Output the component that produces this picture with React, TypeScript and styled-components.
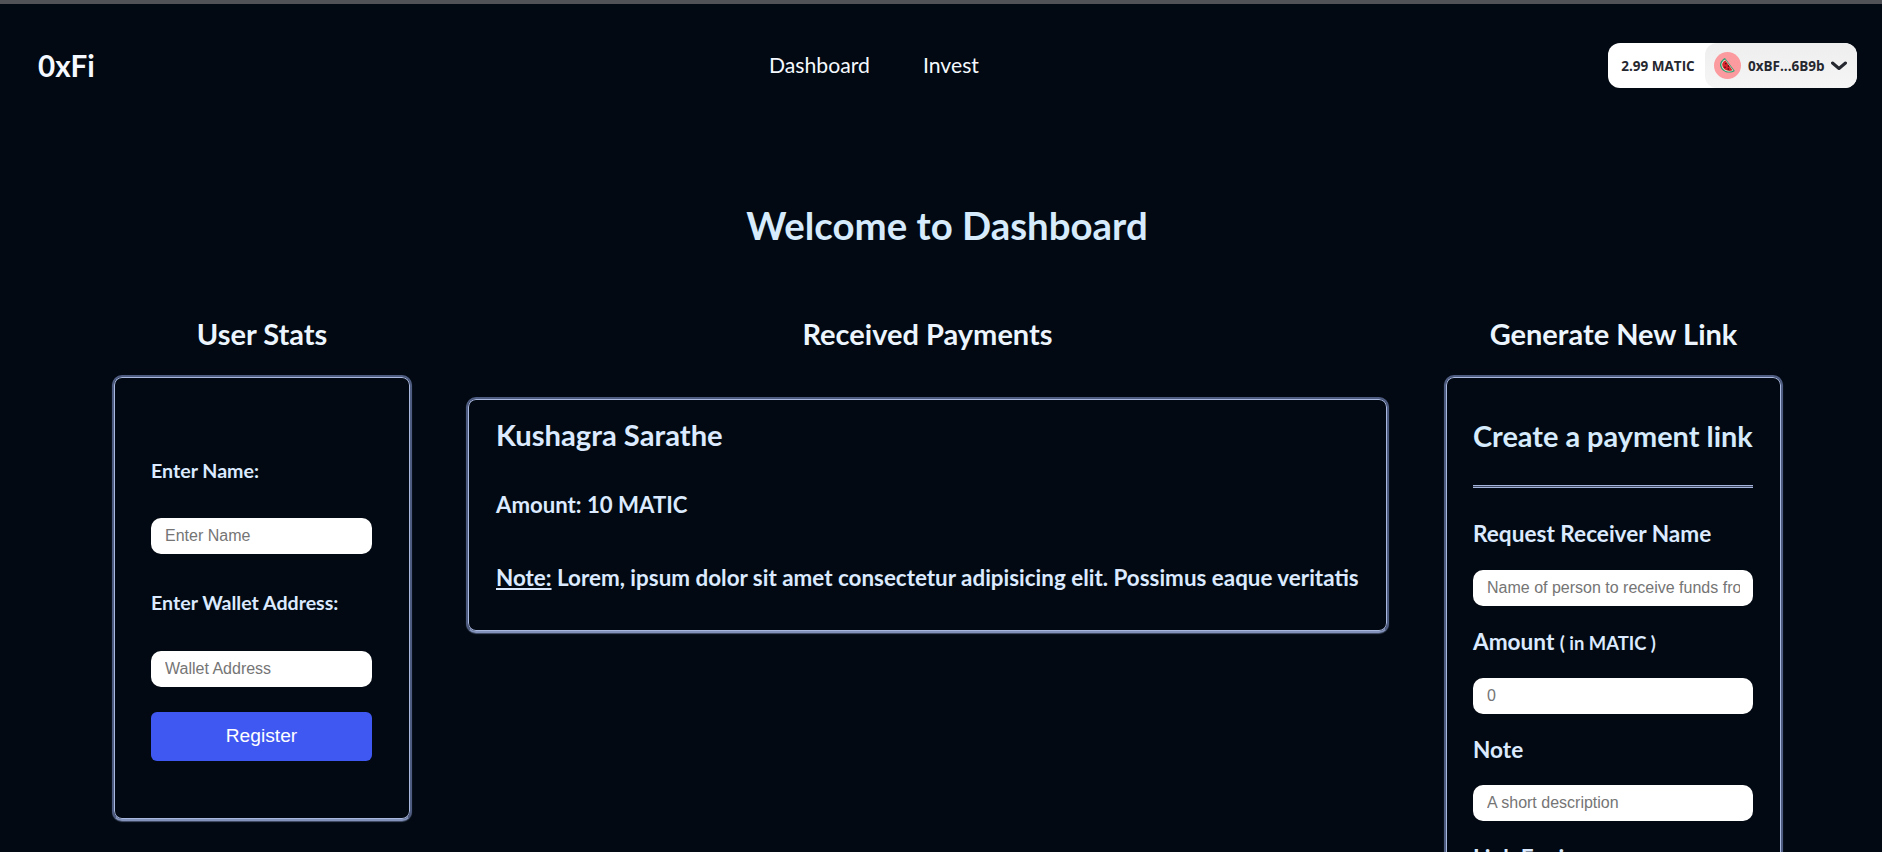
import React from "react";
import styled, { createGlobalStyle } from "styled-components";

const Global = createGlobalStyle`
  html, body { margin: 0; padding: 0; background: #020912; overflow: hidden; }
  body { font-family: Lato, "Liberation Sans", sans-serif; }
  * { box-sizing: border-box; }
`;
const Page = styled.div`
  width: 1882px; height: 852px; overflow: hidden; background: #020912; color: #dbeafe;
  border-top: 4px solid #505257;
`;
const Nav = styled.nav`
  display: flex; align-items: center; height: 123px; padding: 0 25px 0 38px; justify-content: space-between;
`;
const Logo = styled.div`
  font-size: 29.6px; font-weight: 700; color: #f5f9ff; width: 731px;
`;
const NavLinks = styled.div`
  display: flex; gap: 53px; flex: 1; padding-bottom: 1px;
`;
const NavLink = styled.a`
  font-size: 21.2px; color: #f5f9ff;
`;
const Wallet = styled.div`
  display: flex; width: 249px; height: 45px; border-radius: 12px; background: #fff; overflow: hidden;
  font-family: "Open Sans", sans-serif; font-weight: 700; font-size: 13.5px; color: #262830; align-items: stretch;
`;
const Balance = styled.div`
  width: 97px; display: flex; align-items: center; justify-content: center; padding-left: 3px;
`;
const Account = styled.div`
  flex: 1; display: flex; align-items: center; padding-left: 9px; gap: 7px;
  background: linear-gradient(180deg, #eeeeee, #f5f5f5); border-radius: 12px;
`;
const Avatar = styled.span`
  width: 27px; height: 27px; border-radius: 50%; background: #fb9a9f; display: flex; align-items: center; justify-content: center;
`;
const Address = styled.span`
  margin-right: -1px;
`;
const Title = styled.h1`
  margin: 75px 0 0; padding-left: 12px; text-align: center; font-size: 38.4px; font-weight: 700; line-height: 46px; height: 46px; color: #d6ebfb;
`;
const Columns = styled.div`
  display: flex; align-items: flex-start; padding-left: 112px; margin-top: 69px; gap: 54px;
`;
const Column = styled.section<{ $w: number }>`
  width: ${(p) => p.$w}px; flex: none; display: flex; flex-direction: column;
`;
const LinkColumn = styled(Column)`
  margin-left: 1px;
`;
const ColumnTitle = styled.h2`
  margin: 0; text-align: center; font-size: 29px; line-height: 34px; font-weight: 700; color: #ecf5fd; height: 58px;
`;
const Card = styled.div`
  border: 2px solid #4f5c82; border-bottom-color: #8292ba; border-radius: 10px; background: #020912;
  box-shadow: inset 0 0 0 1px #a9b8de, 0 1px 1px rgba(139, 157, 199, 0.5);
`;
const StatsCard = styled(Card)`
  height: 446px; padding: 82px 38px 0 37px; display: flex; flex-direction: column;
`;
const StatLabel = styled.label`
  font-size: 19.6px; font-weight: 700; line-height: 23px; display: block; color: #dbeafe;
`;
const Field = styled.input`
  display: block; width: 100%; height: 36px; border: none; border-radius: 10px; background: #fff; padding: 0 13px 0 14px;
  font-family: "Liberation Sans", Arial, sans-serif; font-size: 16px; outline: none;
  &::placeholder { color: #757575; opacity: 1; }
`;
const NameField = styled(Field)` margin-top: 36px; `;
const WalletLabel = styled(StatLabel)` margin-top: 37px; `;
const AddressField = styled(Field)` margin-top: 37px; `;
const RegisterButton = styled.button`
  margin-top: 25px; height: 49px; width: 100%; border: none; border-radius: 6px; background: #4058f2; color: #fff; padding: 0 0 2px;
  font-family: "Liberation Sans", Arial, sans-serif; font-size: 19.2px;
`;
const PaymentCard = styled(Card)`
  margin-top: 22px; height: 236px; padding: 19px 28px 0 28px;
`;
const Payer = styled.h3`
  margin: 0; font-size: 29.2px; line-height: 34px; font-weight: 700; color: #dbeafe;
`;
const Amount = styled.p`
  margin: 39px 0 0; font-size: 22.2px; line-height: 28px; font-weight: 700; white-space: nowrap;
`;
const Note = styled(Amount)`
  margin-top: 45px; font-size: 22.42px;
`;
const NoteKey = styled.span`
  text-decoration: underline;
`;
const LinkCard = styled(Card)`
  height: 600px; padding: 42px 28px 0 27px;
`;
const LinkHeading = styled.h3`
  margin: 0; font-size: 28.9px; line-height: 34px; font-weight: 700; white-space: nowrap; color: #d6ebfb;
`;
const Divider = styled.hr`
  margin: 32px 0 0; border: none; border-top: 1px solid #a4b3d9; border-bottom: 1px solid #a4b3d9; height: 3px; background: #3c465e;
`;
const LinkLabel = styled.label<{ $top: number }>`
  display: block; font-size: 22.6px; line-height: 28px; font-weight: 700; margin-top: ${(p) => p.$top}px; white-space: nowrap; color: #dbeafe;
`;
const LinkLabelNote = styled.span`
  font-size: 18.4px;
`;
const LinkField = styled(Field)<{ $top: number }>`
  margin-top: ${(p) => p.$top}px;
`;

export default function App() {
  return (
    <Page>
      <Global />
      <Nav>
        <Logo>0xFi</Logo>
        <NavLinks>
          <NavLink>Dashboard</NavLink>
          <NavLink>Invest</NavLink>
        </NavLinks>
        <Wallet>
          <Balance>2.99 MATIC</Balance>
          <Account>
            <Avatar>
              <svg width="17" height="17" viewBox="0 0 17 17">
                <path d="M6 1 L15.8 14 C11 17 2.2 15.8 1 8.2 C0.7 5.5 3 2.4 6 1 Z" fill="#2f9e73" />
                <path d="M6.2 2.4 L14.4 13.6 C10.6 15.6 3.2 14.6 2.4 8 C2.2 6 3.8 3.6 6.2 2.4 Z" fill="#eef4dc" />
                <path d="M6.4 3.2 L13.6 13.2 C10.2 14.8 4 13.8 3.2 7.8 C3.1 6.2 4.4 4.2 6.4 3.2 Z" fill="#d8262f" />
                <rect x="6.2" y="6" width="1.3" height="1.3" fill="#3a1212" />
                <rect x="8.8" y="8.4" width="1.3" height="1.3" fill="#3a1212" />
                <rect x="5.4" y="9.6" width="1.3" height="1.3" fill="#3a1212" />
                <rect x="8.6" y="11.4" width="1.3" height="1.3" fill="#3a1212" />
              </svg>
            </Avatar>
            <Address>0xBF...6B9b</Address>
            <svg width="16" height="10" viewBox="0 0 16 10" fill="none">
              <path d="M1.5 2 L8 7.5 L14.5 2" stroke="#262830" strokeWidth="3" strokeLinecap="round" strokeLinejoin="round" />
            </svg>
          </Account>
        </Wallet>
      </Nav>
      <Title>Welcome to Dashboard</Title>
      <Columns>
        <Column $w={300}>
          <ColumnTitle>User Stats</ColumnTitle>
          <StatsCard>
            <StatLabel>Enter Name:</StatLabel>
            <NameField placeholder="Enter Name" />
            <WalletLabel>Enter Wallet Address:</WalletLabel>
            <AddressField placeholder="Wallet Address" />
            <RegisterButton>Register</RegisterButton>
          </StatsCard>
        </Column>
        <Column $w={923}>
          <ColumnTitle>Received Payments</ColumnTitle>
          <PaymentCard>
            <Payer>Kushagra Sarathe</Payer>
            <Amount>Amount: 10 MATIC</Amount>
            <Note>
              <NoteKey>Note:</NoteKey> Lorem, ipsum dolor sit amet consectetur adipisicing elit. Possimus eaque veritatis
            </Note>
          </PaymentCard>
        </Column>
        <LinkColumn $w={339}>
          <ColumnTitle>Generate New Link</ColumnTitle>
          <LinkCard>
            <LinkHeading>Create a payment link</LinkHeading>
            <Divider />
            <LinkLabel $top={32}>Request Receiver Name</LinkLabel>
            <LinkField $top={22} placeholder="Name of person to receive funds from" />
            <LinkLabel $top={22}>
              Amount <LinkLabelNote>( in MATIC )</LinkLabelNote>
            </LinkLabel>
            <LinkField $top={21} placeholder="0" />
            <LinkLabel $top={22}>Note</LinkLabel>
            <LinkField $top={21} placeholder="A short description" />
            <LinkLabel $top={23}>Link Expiry</LinkLabel>
          </LinkCard>
        </LinkColumn>
      </Columns>
    </Page>
  );
}
